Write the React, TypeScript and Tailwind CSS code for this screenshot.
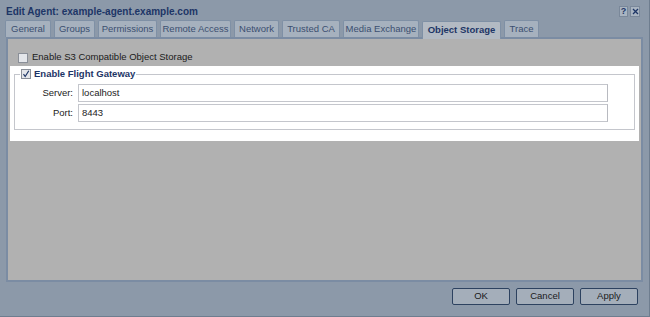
import React from "react";

const tabs: [string, string][] = [
  ["General", "w-[46px]"],
  ["Groups", "w-[41px]"],
  ["Permissions", "w-[59px]"],
  ["Remote Access", "w-[71px]"],
  ["Network", "w-[45px]"],
  ["Trusted CA", "w-[58px]"],
  ["Media Exchange", "w-[76px]"],
  ["Object Storage", "w-[79px]"],
  ["Trace", "w-[35px]"],
];

const Check = ({ checked }: { checked?: boolean }) => (
  <span className="w-[10px] h-[10px] shrink-0 border border-[#8a8f98] bg-[#e4e6ea] flex items-center justify-center">
    {checked && (
      <svg width="8" height="8" viewBox="0 0 8 8">
        <path d="M1.5 4.2 L3.2 6.5 L6.8 0.8" stroke="#1d3566" strokeWidth="1.2" fill="none" />
      </svg>
    )}
  </span>
);

const Field = ({ label, value }: { label: string; value: string }) => (
  <div className="flex items-center h-[18px]">
    <span className="w-[63px] text-right pr-[5px] text-[9.5px] text-[#222]">{label}</span>
    <div className="w-[530px] h-[18px] border border-[#c4c6cc] border-r-[#b8bac0] bg-white flex items-center px-[3px] text-[9.5px] text-[#222]">
      {value}
    </div>
  </div>
);

export default function App() {
  return (
    <div
      className="w-[650px] h-[317px] bg-[#8c99a9] flex flex-col border-r border-b border-[#6e7d8f] overflow-hidden"
      style={{ fontFamily: '"Liberation Sans", Arial, sans-serif' }}
    >
      <div className="h-[19px] pl-[6px] pr-[9px] flex items-center justify-between">
        <span className="text-[10px] font-bold text-[#1d3566] pt-[3px] whitespace-nowrap">
          Edit Agent: example-agent.example.com
        </span>
        <div className="flex gap-[2px] pt-[4px]">
          <span className="w-[9px] h-[11px] border border-[#7a889a] bg-[#a9b4c1] text-[9px] font-bold text-[#1d3566] flex items-center justify-center leading-none">
            ?
          </span>
          <span className="w-[10px] h-[11px] border border-[#7a889a] bg-[#a9b4c1] flex items-center justify-center">
            <svg width="7" height="7" viewBox="0 0 7 7">
              <path d="M1 1 L6 6 M6 1 L1 6" stroke="#1d3566" strokeWidth="1.3" />
            </svg>
          </span>
        </div>
      </div>
      <div className="h-[18px] flex items-end gap-[3px] pl-[5px]">
        {tabs.map(([t, w]) =>
          t === "Object Storage" ? (
            <div
              key={t}
              className={`${w} shrink-0 whitespace-nowrap h-[18px] -mb-[2px] relative flex items-center justify-center border border-b-0 border-[#7f90a5] rounded-t-[2px] bg-[#b3bac3] text-[9.5px] font-bold text-[#1d3566]`}
            >
              {t}
            </div>
          ) : (
            <div
              key={t}
              className={`${w} shrink-0 whitespace-nowrap h-[17px] flex items-center justify-center border border-b-0 border-[#7f90a5] rounded-t-[2px] bg-[#a6b1be] text-[9.5px] text-[#3b4f70]`}
            >
              {t}
            </div>
          )
        )}
      </div>
      <div className="mx-[6px] h-[245px] border-2 border-[#7b8ca3] bg-[#b1b1b1] flex flex-col">
        <div className="h-[25px] flex items-center gap-[4px] pl-[10px] pt-[12px]">
          <Check />
          <span className="text-[9.5px] text-[#1a1a1a]">Enable S3 Compatible Object Storage</span>
        </div>
        <div className="mx-[2px] mt-[2px] h-[75px] bg-white px-[4px] pt-[1px]">
          <fieldset className="border border-[#c4c6cc] h-[63px] pt-[3px] flex flex-col gap-[2px]">
            <legend className="ml-[5px] px-[1px] flex items-center gap-[3px] h-[14px]">
              <Check checked />
              <span className="text-[9.5px] font-bold text-[#1d3566]">Enable Flight Gateway</span>
            </legend>
            <Field label="Server:" value="localhost" />
            <Field label="Port:" value="8443" />
          </fieldset>
        </div>
      </div>
      <div className="flex justify-end gap-[6px] pr-[11px] pt-[6px]">
        {["OK", "Cancel", "Apply"].map((b) => (
          <button
            key={b}
            className="w-[58px] h-[17px] border border-[#2d4260] rounded-[2px] bg-[#a4aeba] text-[9.5px] text-[#1a1a1a] flex items-center justify-center"
          >
            {b}
          </button>
        ))}
      </div>
    </div>
  );
}
